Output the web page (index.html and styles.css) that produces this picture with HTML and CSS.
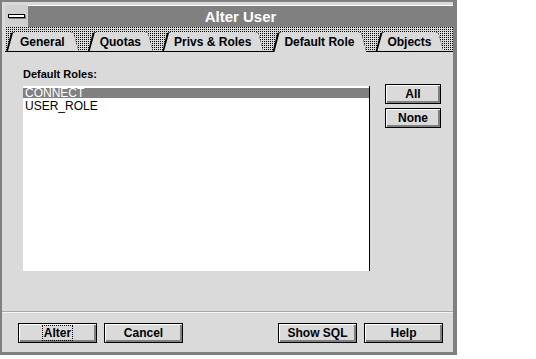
FILE: index.html
```html
<!DOCTYPE html>
<html>
<head>
<meta charset="utf-8">
<link rel="stylesheet" href="styles.css">
</head>
<body>
<div class="window">
  <div class="titlebar">
    <div class="sysmenu"><span class="sysbar"></span></div>
    <div class="title">Alter User</div>
  </div>
  <div class="tabband">
    <div class="tab first"><span>General</span></div>
    <div class="tab"><span>Quotas</span></div>
    <div class="tab"><span>Privs &amp; Roles</span></div>
    <div class="tab active"><span>Default Role</span></div>
    <div class="tab"><span>Objects</span></div>
  </div>
  <div class="content">
    <div class="label">Default Roles:</div>
    <div class="row">
      <div class="list">
        <div class="item selected">CONNECT</div>
        <div class="item">USER_ROLE</div>
      </div>
      <div class="side">
        <button class="btn small">All</button>
        <button class="btn small">None</button>
      </div>
    </div>
  </div>
  <div class="sep"></div>
  <div class="footer">
    <div class="group">
      <button class="btn wide"><span class="focus">Alter</span></button>
      <button class="btn wide">Cancel</button>
    </div>
    <div class="group">
      <button class="btn wide">Show SQL</button>
      <button class="btn wide">Help</button>
    </div>
  </div>
</div>
</body>
</html>
```
FILE: styles.css
```css
html, body {
  margin: 0;
  padding: 0;
  background: #ffffff;
}
body {
  font-family: "Liberation Sans", Arial, sans-serif;
  width: 536px;
  height: 359px;
}
.window {
  width: 451px;
  height: 350px;
  border-style: solid;
  border-color: #808080;
  border-width: 2px 4px 3px 2px;
  background: #dadada;
  display: flex;
  flex-direction: column;
  padding: 0;
}
.titlebar {
  margin: 3px 0 0 3px;
  height: 22px;
  display: flex;
}
.sysmenu {
  width: 23px;
  height: 22px;
  background: #d0d0d0;
  display: flex;
  align-items: center;
  justify-content: center;
}
.sysbar {
  display: block;
  width: 15px;
  height: 2px;
  background: #fff;
  border: 1px solid #000;
  box-shadow: 1px 1px 0 #808080;
}
.title {
  flex: 1;
  background: #808080;
  border-top: 1px solid #fff;
  color: #fff;
  font-weight: bold;
  font-size: 15px;
  display: flex;
  align-items: center;
  justify-content: center;
  padding-bottom: 1px;
}
.tabband {
  margin-left: 3px;
  height: 24px;
  border-bottom: 1px solid #000;
  background: #dadada conic-gradient(#000 0 25%, transparent 0 100%) 0 0 / 2px 2px;
  display: flex;
  align-items: flex-end;
  gap: 9px;
  padding-left: 1px;
}
.tab {
  flex-shrink: 0;
  white-space: nowrap;
  height: 20px;
  padding: 0 12px;
  background: #000;
  clip-path: polygon(0 100%, 5px 1px, 8px 0, calc(100% - 8px) 0, calc(100% - 5px) 1px, 100% 100%);
  position: relative;
  margin-bottom: -1px;
  display: flex;
  align-items: center;
  font-size: 12px;
  font-weight: bold;
  color: #000;
}
.tab.first {
  padding: 0 14px;
}
.tab::before {
  content: "";
  position: absolute;
  inset: 0;
  background: #dadada;
  clip-path: polygon(2px 100%, 7px 1px, 9px 0, calc(100% - 8px) 0, calc(100% - 5px) 1px, 100% 100%);
  bottom: 1px;
}
.tab.active::before {
  bottom: 0;
}
.tab span {
  position: relative;
}
.content {
  flex: 1;
  padding: 14px 0 0 21px;
}
.label {
  font-size: 11px;
  font-weight: bold;
  height: 16px;
  line-height: 16px;
  margin-bottom: 2px;
}
.row {
  display: flex;
  align-items: flex-start;
  gap: 15px;
}
.list {
  width: 347px;
  height: 185px;
  margin-top: 2px;
  background: #fff;
  border-right: 1px solid #000;
  padding-top: 2px;
  box-sizing: border-box;
}
.item {
  font-size: 12px;
  height: 12px;
  line-height: 12px;
  padding-left: 2px;
}
.item.selected {
  background: #808080;
  color: #fff;
  height: 10px;
  line-height: 10px;
  margin-bottom: 2px;
}
.side {
  display: flex;
  flex-direction: column;
  gap: 4px;
}
.btn {
  font-family: "Liberation Sans", Arial, sans-serif;
  font-size: 12px;
  font-weight: bold;
  color: #000;
  background: #dadada;
  border: 1px solid #000;
  box-shadow: inset 1px 1px 0 #fff, inset -2px -2px 0 #808080;
  height: 20px;
  padding: 0 0 1px 0;
  margin: 0;
  border-radius: 0;
}
.btn.small {
  width: 56px;
}
.btn.wide {
  width: 79px;
}
.focus {
  border: 1px dotted #000;
  padding: 0 1px;
}
.sep {
  height: 1px;
  background: #a8a8a8;
  border-bottom: 1px solid #f4f4f4;
}
.footer {
  height: 39px;
  box-sizing: border-box;
  padding: 10px 0 0 16px;
  display: flex;
  gap: 95px;
}
.group {
  display: flex;
  gap: 7px;
}
```
